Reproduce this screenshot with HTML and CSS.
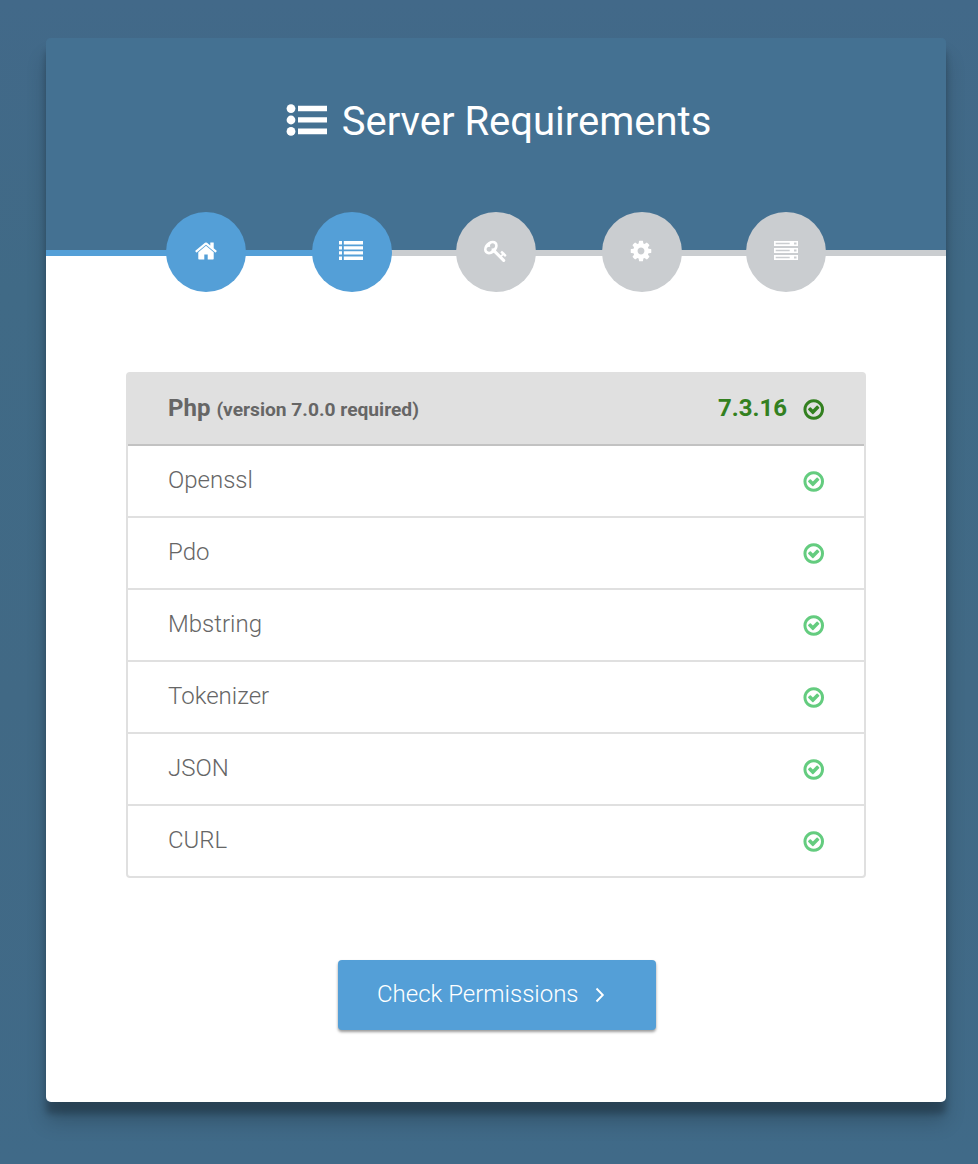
FILE: index.html
```html
<!DOCTYPE html>
<html lang="en">
<head>
<meta charset="utf-8">
<title>Server Requirements</title>
<link rel="stylesheet" href="styles.css">
</head>
<body>
<svg class="sprite" width="0" height="0">
  <symbol id="check" viewBox="20 -35 1792 1792"><path d="M1299 813l-422 422q-19 19-45 19t-45-19l-294-294q-19-19-19-45t19-45l102-102q19-19 45-19t45 19l147 147 275-275q19-19 45-19t45 19l102 102q19 19 19 45t-19 45zm141 83q0-148-73-273t-198-198-273-73-273 73-198 198-73 273 73 273 198 198 273 73 273-73 198-198 73-273zm224 0q0 209-103 385.500t-279.500 279.500-385.500 103-385.500-103-279.500-279.500-103-385.500 103-385.500 279.500-279.500 385.500-103 385.500 103 279.500 279.500 103 385.500z"/></symbol>
</svg>
<main class="card">
  <header class="header">
    <svg class="title-icon" width="42" height="32" viewBox="0 0 42 32"><circle cx="5" cy="4.600" r="4.400"/><circle cx="5" cy="16" r="4.400"/><circle cx="5" cy="27.400" r="4.400"/><path d="M12 1.800h29v5.400H12zM12 13.200h29v5.400H12zM12 24.600h29v5.600H12z"/></svg>
    <h1 class="title">Server Requirements</h1>
  </header>
  <nav class="steps">
    <span class="step active"><svg width="24" height="24" viewBox="0 0 1792 1792"><path d="M1472 992v480q0 26-19 45t-45 19h-384v-384h-256v384h-384q-26 0-45-19t-19-45v-480q0-1 .5-3t.5-3l575-474 575 474q1 2 1 6zm223-69l-62 74q-8 9-21 11h-3q-13 0-21-7l-692-577-692 577q-12 8-24 7-13-2-21-11l-62-74q-8-10-7-23.500t11-21.500l719-599q32-26 76-26t76 26l244 204v-195q0-14 9-23t23-9h192q14 0 23 9t9 23v408l219 182q10 8 11 21.500t-7 23.500z"/></svg></span>
    <span class="step active"><svg width="24" height="24" viewBox="0 -1 24 24"><path d="M0 1h3v3.500H0zM4.800 1H24v3.500H4.800zM0 6.200h3v3.300H0zM4.800 6.200H24v3.300H4.800zM0 11.200h3v3.300H0zM4.800 11.200H24v3.300H4.800zM0 16.500h3V20H0zM4.800 16.500H24V20H4.800z"/></svg></span>
    <span class="step"><svg width="24" height="24" viewBox="0 0 1792 1792"><path d="M832 512q0-80-56-136t-136-56-136 56-56 136q0 42 19 83-41-19-83-19-80 0-136 56t-56 136 56 136 136 56 136-56 56-136q0-42-19-83 41 19 83 19 80 0 136-56t56-136zm851 704q0 17-49 66t-66 49q-9 0-28.500-16t-36.500-33-38.500-40-24.500-26l-96 96 220 220q28 28 28 68 0 42-39 81t-81 39q-40 0-68-28l-671-671q-176 131-365 131-163 0-265.500-102.500t-102.500-265.500q0-160 95-313t248-248 313-95q163 0 265.500 102.500t102.500 265.500q0 189-131 365l355 355 96-96q-3-3-26-24.500t-40-38.500-33-36.500-16-28.500q0-17 49-66t66-49q13 0 23 10 6 6 46 44.500t82 79.500 86.500 86 73 78 28.500 41z"/></svg></span>
    <span class="step"><svg width="24" height="24" viewBox="0 0 1792 1792"><path d="M1152 896q0-106-75-181t-181-75-181 75-75 181 75 181 181 75 181-75 75-181zm512-109v222q0 12-8 23t-20 13l-185 28q-19 54-39 91 35 50 107 138 10 12 10 25t-9 23q-27 37-99 108t-94 71q-12 0-26-9l-138-108q-44 23-91 38-16 136-29 186-7 28-36 28h-222q-14 0-24.500-8.500t-11.500-21.500l-28-184q-49-16-90-37l-141 107q-10 9-25 9-14 0-25-11-126-114-165-168-7-10-7-23 0-12 8-23 15-21 51-66.500t54-70.500q-27-50-41-99l-183-27q-13-2-21-12.500t-8-23.500v-222q0-12 8-23t19-13l186-28q14-46 39-92-40-57-107-138-10-12-10-24 0-10 9-23 26-36 98.500-107.500t94.500-71.500q13 0 26 10l138 107q44-23 91-38 16-136 29-186 7-28 36-28h222q14 0 24.500 8.500t11.500 21.500l28 184q49 16 90 37l142-107q9-9 24-9 13 0 25 10 129 119 165 170 7 8 7 22 0 12-8 23-15 21-51 66.500t-54 70.500q26 50 41 98l183 28q13 2 21 12.500t8 23.500z"/></svg></span>
    <span class="step"><svg width="24" height="24" viewBox="0 -1 24 24"><path fill-rule="evenodd" d="M0 1h24v5H0zM1.700 2.800v1.400h14V2.800zM20 2.500v2h2.500v-2zM0 8h24v5H0zM1.700 9.800v1.400h14V9.800zM20 9.500v2h2.500v-2zM0 15h24v5H0zM1.700 16.800v1.400h14v-1.400zM20 16.500v2h2.500v-2z"/></svg></span>
  </nav>
  <section class="body">
    <ul class="list">
      <li class="row head"><span>Php <small>(version 7.0.0 required)</small></span><span class="version">7.3.16</span><svg class="check"><use href="#check"/></svg></li>
      <li class="row"><span>Openssl</span><svg class="check"><use href="#check"/></svg></li>
      <li class="row"><span>Pdo</span><svg class="check"><use href="#check"/></svg></li>
      <li class="row"><span>Mbstring</span><svg class="check"><use href="#check"/></svg></li>
      <li class="row"><span>Tokenizer</span><svg class="check"><use href="#check"/></svg></li>
      <li class="row"><span>JSON</span><svg class="check"><use href="#check"/></svg></li>
      <li class="row"><span>CURL</span><svg class="check"><use href="#check"/></svg></li>
    </ul>
    <a class="button">Check Permissions<svg width="10" height="16" viewBox="0 0 10 16"><path d="M1.500 1.500L7.800 8l-6.300 6.500" fill="none" stroke="#fff" stroke-width="1.900"/></svg></a>
  </section>
</main>
</body>
</html>
```
FILE: styles.css
```css
* { box-sizing: border-box; }
body {
  margin: 0;
  height: 1164px;
  padding: 38px 32px 0 46px;
  overflow: hidden;
  background: linear-gradient(#426989, #406a86 25%, #416985 60%, #406a88);
  font-family: Roboto, sans-serif;
  font-weight: 300;
  color: #666;
}
svg { fill: currentColor; flex: none; }
.sprite { position: absolute; }
.card {
  height: 1064px;
  border-radius: 5px;
  background: linear-gradient(#447192 100px, #fff 100px);
  box-shadow: 0 20px 20px rgba(0, 0, 0, .19), 0 12px 6px rgba(0, 0, 0, .23);
}
.header {
  display: flex;
  justify-content: center;
  height: 212px;
  padding: 58px 0 0 3px;
  border-radius: 5px 5px 0 0;
  background: #447192;
  color: #fff;
}
.title-icon { margin: 8px 14px 0 2px; }
.title {
  margin: 0;
  font-size: 40px;
  font-weight: 400;
  line-height: 52px;
}
.steps {
  display: flex;
  align-items: flex-start;
  gap: 65px;
  height: 6px;
  padding-left: 120px;
  background: linear-gradient(90deg, #549fd7 306px, #cacdd0 306px);
}
.step {
  display: flex;
  align-items: center;
  justify-content: center;
  width: 80px;
  height: 80px;
  flex: none;
  margin-top: -38px;
  border-radius: 50%;
  background: #cacdd0;
  color: #fff;
}
.step:nth-child(2n) { margin-left: 1px; }
.step:nth-child(2n + 3) { margin-left: -1px; }
.step svg { margin: 0 0 2px; }
.step:nth-child(2n) svg { margin-right: 2px; }
.active { background: #549fd7; }
.body {
  display: flex;
  flex-direction: column;
  align-items: center;
  padding: 116px 80px 0;
}
.list {
  width: 740px;
  margin: 0;
  padding: 0;
  list-style: none;
  border: 2px solid #e0e0e0;
  border-radius: 4px;
}
.row {
  display: flex;
  align-items: center;
  height: 72px;
  padding: 0 38px 2px 40px;
  border-bottom: 2px solid #e0e0e0;
  font-size: 24px;
}
.row:last-child { height: 70px; border-bottom: 0; padding-bottom: 2px; }
.head { background: #e0e0e0; border-bottom-color: #c2c2c2; font-weight: 700; }
.head small { font-size: 19.2px; }
.version { margin-left: auto; color: #338020; }
.check {
  width: 24px;
  height: 24px;
  margin: 2px 0 0 auto;
  color: #64cc7f;
}
.head .check { margin-left: 15px; color: #338020; }
.button {
  display: flex;
  align-items: center;
  width: 318px;
  height: 70px;
  margin: 82px 0 0 2px;
  padding: 0 0 2px 39px;
  border-radius: 4px;
  background: #549fd7;
  box-shadow: 0 2px 3px rgba(0, 0, 0, .4);
  color: #fff;
  font-size: 24px;
}
.button svg { margin: 1px 0 0 16px; }
```
